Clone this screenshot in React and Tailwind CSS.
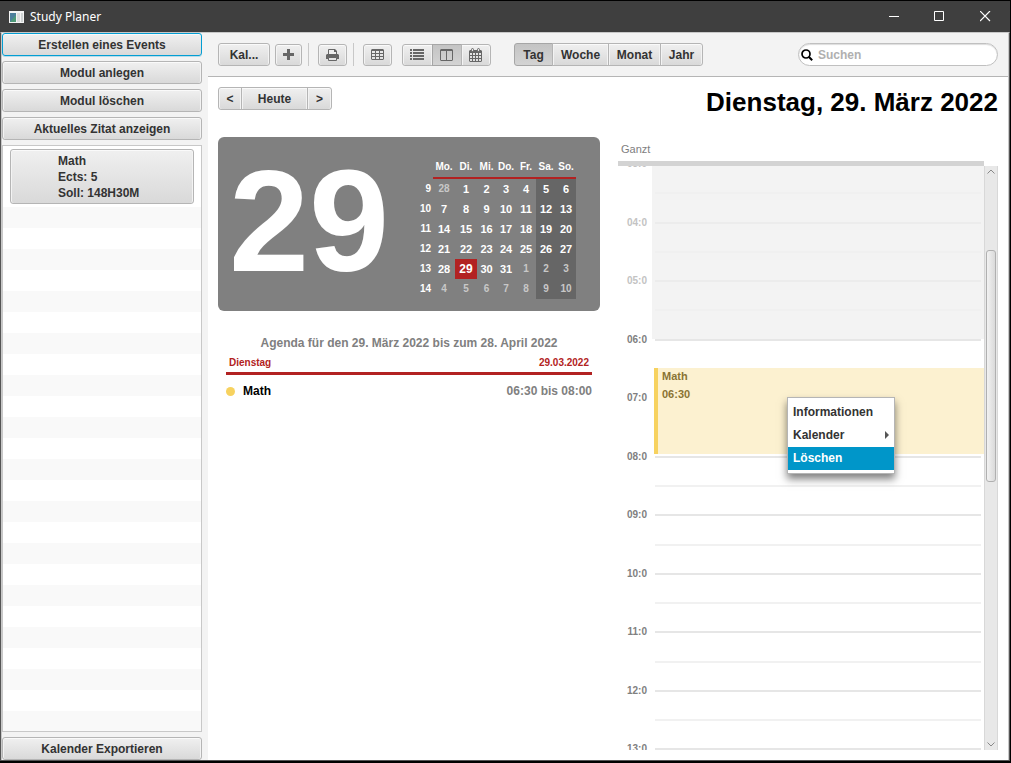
import React from "react";

const face = "bg-linear-to-b from-[#f0f0f0] to-[#d9d9d9] border text-[#333]";
const raised = `${face} border-[#b5b5b5] shadow-[inset_0_1px_0_#fafafa,inset_1px_0_0_#f3f3f3,inset_-1px_0_0_#f3f3f3]`;
const focusRing = `${face} border-[#039ed3] shadow-[inset_0_1px_0_#fafafa,0_1px_0_#b9dcea]`;
const pressed =
  "bg-linear-to-b from-[#c4c4c4] to-[#d3d3d3] border border-[#a6a6a6] text-[#333]";

function SideButton({ children, focused }) {
  return (
    <button
      className={`flex h-[23px] w-full shrink-0 items-center justify-center rounded-[3px] ${
        focused ? focusRing : raised
      }`}
    >
      {children}
    </button>
  );
}

function Segment({ active, label, width, children }) {
  return (
    <button
      aria-label={label}
      aria-pressed={active}
      className={`-ml-px flex h-full items-center justify-center first:ml-0 first:rounded-l-[3px] last:rounded-r-[3px] ${width} ${
        active ? pressed : raised
      }`}
    >
      {children}
    </button>
  );
}

const PlusIcon = () => (
  <svg width="11" height="12" viewBox="0 0 11 12" fill="#666">
    <path d="M4 0h3v4h4v3H7v4H4V7H0V4h4z" />
  </svg>
);

const PrintIcon = () => (
  <svg width="13" height="12" viewBox="0 0 13 12">
    <path d="M2.500 6V.5h6l2 2V6" fill="#eee" stroke="#666" />
    <path d="M8 0v3h3V2L9 0z" fill="#666" />
    <path d="M1 5h11l1 1v4H0V6z" fill="#666" />
    <path d="M2.500 8.500h8v3h-8z" fill="#e4e4e4" stroke="#666" />
  </svg>
);

const GridIcon = () => (
  <svg width="13" height="12" viewBox="0 0 13 12" fill="#666">
    <path
      fillRule="evenodd"
      d="M1 0h11l1 1v9l-1 1H1l-1-1V1zM1 2v2h3V2zM5 2v2h3V2zM9 2v2h3V2zM1 5v2h3V5zM5 5v2h3V5zM9 5v2h3V5zM1 8v2h3V8zM5 8v2h3V8zM9 8v2h3V8z"
    />
  </svg>
);

const ListIcon = () => (
  <svg width="15" height="12" viewBox="0 0 15 12" fill="#666">
    <path d="M0 0h2v2H0zM3 0h11v2H3zM0 3h2v2H0zM3 3h11v2H3zM0 6h2v2H0zM3 6h11v2H3zM0 9h2v2H0zM3 9h11v2H3z" />
  </svg>
);

const ColumnsIcon = () => (
  <svg width="14" height="12" viewBox="0 0 14 12" fill="#666">
    <path
      fillRule="evenodd"
      d="M1 0h11l1 1v10l-1 1H1l-1-1V1zM1 2v9h5V2zM7 2v9h5V2z"
    />
  </svg>
);

const CalendarIcon = () => (
  <svg width="14" height="14" viewBox="0 0 14 14" fill="#666">
    <path
      fillRule="evenodd"
      d="M0 3l1-1h11l1 1v10l-1 1H1l-1-1zM1 5v2h2V5zM4 5v2h2V5zM7 5v2h2V5zM10 5v2h2V5zM1 8v2h2V8zM4 8v2h2V8zM7 8v2h2V8zM10 8v2h2V8zM1 11v2h2v-2zM4 11v2h2v-2zM7 11v2h2v-2zM10 11v2h2v-2z"
    />
    <rect x="2.500" y=".5" width="2" height="3" rx="1" fill="#e8e8e8" stroke="#666" />
    <rect x="8.500" y=".5" width="2" height="3" rx="1" fill="#e8e8e8" stroke="#666" />
  </svg>
);

function TitleBar() {
  return (
    <header className="flex h-8 shrink-0 items-center border-t border-black bg-[#3f3f3f] pr-px text-white">
      <svg className="ml-[9px]" width="15" height="12" viewBox="0 0 15 12">
        <rect width="15" height="12" fill="#f4f4f4" />
        <rect x="1" y="2" width="6" height="9" fill="#4d7f9c" />
        <path d="M1 11l6-7v7z" fill="#4f9a78" />
        <rect x="8" y="2" width="3" height="9" fill="#dcdcdc" />
        <rect x="12" y="2" width="2" height="9" fill="#cfd3d3" />
      </svg>
      <h1 className="ml-[6px] flex-1 font-['Noto_Sans','Open_Sans',sans-serif] text-[12px] font-normal">Study Planer</h1>
      <button aria-label="Minimieren" className="flex h-full w-[45px] items-center justify-center">
        <svg width="11" height="11" stroke="#fff"><path d="M0 5.500h10" /></svg>
      </button>
      <button aria-label="Maximieren" className="flex h-full w-[45px] items-center justify-center">
        <svg width="11" height="11" fill="none" stroke="#fff"><path d="M.5 .5h9v9h-9z" /></svg>
      </button>
      <button aria-label="Schließen" className="flex h-full w-[47px] items-center justify-center">
        <svg width="11" height="11" stroke="#fff" strokeWidth="1.200"><path d="M0 0l10 10M10 0L0 10" /></svg>
      </button>
    </header>
  );
}

function Sidebar() {
  return (
    <aside className="flex w-[206px] shrink-0 flex-col gap-[5px] bg-[#f3f3f3] pr-[6px]">
      <SideButton focused>Erstellen eines Events</SideButton>
      <SideButton>Modul anlegen</SideButton>
      <SideButton>Modul löschen</SideButton>
      <SideButton>Aktuelles Zitat anzeigen</SideButton>
      <ul className="min-h-0 flex-1 overflow-hidden border border-[#c8c8c8] bg-white">
        <li className="h-[61px] px-[7px] pt-[3px]">
          <button className={`h-[55px] w-full rounded-[3px] pl-[47px] text-left leading-4 ${raised}`}>
            Math
            <br />
            Ects: 5
            <br />
            Soll: 148H30M
          </button>
        </li>
        {Array.from({ length: 60 }, (_, i) => (
          <li key={i} className="h-[21px] odd:bg-white even:bg-[#f9f9f9]" />
        ))}
      </ul>
      <SideButton>Kalender Exportieren</SideButton>
    </aside>
  );
}

function Toolbar() {
  return (
    <div className="flex h-[44px] shrink-0 items-center border-b border-[#b5b5b5] bg-[#f3f3f3] px-[10px]">
      <button className={`h-[23px] w-[52px] rounded-[3px] ${raised}`}>Kal...</button>
      <button aria-label="Hinzufügen" className={`ml-[5px] flex h-[22px] w-[27px] items-center justify-center rounded-[3px] ${raised}`}>
        <PlusIcon />
      </button>
      <div className="ml-[6px] h-[23px] w-px bg-[#c8c8c8]" />
      <button aria-label="Drucken" className={`ml-[9px] flex h-[22px] w-[29px] items-center justify-center rounded-[3px] ${raised}`}>
        <PrintIcon />
      </button>
      <div className="ml-[6px] h-[23px] w-px bg-[#c8c8c8]" />
      <button aria-label="Tabelle" className={`ml-[9px] flex h-[22px] w-[29px] items-center justify-center rounded-[3px] ${raised}`}>
        <GridIcon />
      </button>
      <div className="ml-[10px] flex h-[22px]">
        <Segment label="Liste" width="w-[31px]"><ListIcon /></Segment>
        <Segment label="Spalten" width="w-[30px]" active><ColumnsIcon /></Segment>
        <Segment label="Kalender" width="w-[30px]"><CalendarIcon /></Segment>
      </div>
      <div className="ml-[23px] flex h-[23px]">
        <Segment width="w-[39px]" active>Tag</Segment>
        <Segment width="w-[57px]">Woche</Segment>
        <Segment width="w-[53px]">Monat</Segment>
        <Segment width="w-[43px]">Jahr</Segment>
      </div>
      <label className="ml-auto flex h-[23px] w-[200px] items-center rounded-full border border-[#c0c0c0] bg-white pl-[2px] shadow-[inset_0_1px_1px_#ddd]">
        <svg width="12" height="12" viewBox="0 0 12 12" fill="none" stroke="#000" strokeWidth="1.700">
          <circle cx="5" cy="5" r="4" />
          <path d="M8 8l3.200 3.200" strokeWidth="2" />
        </svg>
        <input
          type="text"
          aria-label="Suchen"
          placeholder="Suchen"
          className="ml-[5px] min-w-0 flex-1 bg-transparent outline-none placeholder:text-[#b0b0b0]"
        />
      </label>
    </div>
  );
}

const weeks = [
  [9, 28, 1, 2, 3, 4, 5, 6],
  [10, 7, 8, 9, 10, 11, 12, 13],
  [11, 14, 15, 16, 17, 18, 19, 20],
  [12, 21, 22, 23, 24, 25, 26, 27],
  [13, 28, 29, 30, 31, 1, 2, 3],
  [14, 4, 5, 6, 7, 8, 9, 10],
];

function MiniCalendar() {
  return (
    <table className="table-fixed border-collapse text-center text-[11px] leading-5 text-white">
      <colgroup>
        <col className="w-[20px]" />
        <col className="w-[22px]" />
        <col className="w-[22px]" />
        <col className="w-[19px]" />
        <col className="w-[20px]" />
        <col className="w-[20px]" />
        <col className="w-[20px]" />
        <col className="w-[20px]" />
      </colgroup>
      <thead className="text-[10px]">
        <tr>
          <th className="h-[20px] p-0" />
          {["Mo.", "Di.", "Mi.", "Do.", "Fr.", "Sa.", "So."].map((d) => (
            <th key={d} className="h-[20px] p-0">{d}</th>
          ))}
        </tr>
        <tr>
          <td className="h-[2px] p-0" />
          <td colSpan={7} className="h-[2px] bg-[#b22222] p-0" />
        </tr>
      </thead>
      <tbody>
        {weeks.map(([week, ...days], row) => (
          <tr key={week}>
            <th className="h-[20px] p-0 pr-[2px] text-right text-[10px]">{week}</th>
            {days.map((day, col) => {
              const outside = (row === 0 && day > 7) || (row > 3 && day < 15);
              const today = row === 4 && day === 29;
              return (
                <td
                  key={col}
                  className={`h-[20px] p-0 ${outside ? "text-[10px] text-[#c8c8c8]" : ""} ${
                    today ? "bg-[#b22222] text-[12px]" : col > 4 ? "bg-[#666]" : ""
                  }`}
                >
                  {day}
                </td>
              );
            })}
          </tr>
        ))}
      </tbody>
    </table>
  );
}

function Overview() {
  return (
    <section className="flex min-w-0 flex-[382] flex-col">
      <div className="flex h-[174px] shrink-0 items-start justify-between rounded-[6px] bg-[#808080] pl-[11px] pr-[24px] pt-[20px]">
        <div className="text-[144px] leading-[130px] text-white">29</div>
        <MiniCalendar />
      </div>
      <h3 className="mt-[24px] text-center leading-4 text-[#808080]">Agenda für den 29. März 2022 bis zum 28. April 2022</h3>
      <div className="mx-2 flex justify-between border-b-[3px] border-[#b22222] px-[3px] pb-[3px] pt-[6px] text-[10px] leading-[12px] text-[#b22222]">
        <span>Dienstag</span>
        <span>29.03.2022</span>
      </div>
      <div className="mx-2 mt-2 flex items-center leading-4">
        <span className="size-[9px] rounded-full bg-[#f7d25f]" />
        <span className="ml-2 flex-1 text-black">Math</span>
        <span className="text-[#808080]">06:30 bis 08:00</span>
      </div>
    </section>
  );
}

function ContextMenu() {
  return (
    <div
      role="menu"
      className="absolute left-[133px] top-[29px] flex w-[108px] flex-col border border-[#b5b5b5] bg-white py-[3px] text-[12px] text-[#333] shadow-[0_5px_8px_rgba(0,0,0,0.5)]"
    >
      <button role="menuitem" className="h-[23px] px-[5px] text-left">Informationen</button>
      <button role="menuitem" className="flex h-[23px] items-center justify-between px-[5px]">
        Kalender
        <svg width="4" height="8" fill="#555"><path d="M0 0l4 4-4 4z" /></svg>
      </button>
      <button role="menuitem" className="h-[23px] bg-[#0096c9] px-[5px] text-left text-white">Löschen</button>
    </div>
  );
}

const firstHour = 3;
const hours = Array.from({ length: 11 }, (_, i) => firstHour + i);
const percent = (h) => `${(h / hours.length) * 100}%`;

function DayView() {
  const start = 6.5;
  const end = 8;
  return (
    <section className="flex min-w-0 flex-[380] flex-col">
      <div className="mr-[14px] h-[29px] shrink-0 border-b-[5px] border-[#d3d3d3] pl-[3px] text-[11px] font-normal leading-6 text-[#808080]">
        Ganzt
      </div>
      <div className="flex min-h-0 flex-1">
        <div className="min-w-0 flex-1 overflow-hidden">
          <div className="relative -mt-[3px] flex h-[644px]">
            <div className="flex w-[34px] flex-col pr-[5px] text-right text-[10px] leading-3">
              {hours.map((h) => (
                <div key={h} className={`flex-1 ${h < 6 ? "text-[#c3c3c3]" : "text-[#808080]"}`}>
                  <div className="-mt-[5px]">{String(h).padStart(2, "0")}:0</div>
                </div>
              ))}
            </div>
            <div className="flex flex-1 flex-col">
              {hours.map((h) => (
                <div key={h} className={`flex flex-1 flex-col px-[3px] ${h < 6 ? "bg-[#f3f3f3]" : ""}`}>
                  <div className={`flex-1 border-t-2 ${h < 6 ? "border-[#ececec]" : "border-[#e6e6e6]"}`} />
                  <div className={`flex-1 border-t-2 ${h < 6 ? "border-[#f0f0f0]" : "border-[#f1f1f1]"}`} />
                </div>
              ))}
            </div>
            <div
              className="absolute left-[36px] right-0 pb-[2px]"
              style={{ top: percent(start - firstHour), height: percent(end - start) }}
            >
              <div className="h-full border-l-4 border-[#f7d25f] bg-[#fcf1d0] pl-1 text-[11px] text-[#8a7433]">
                <div className="leading-4">Math</div>
                <div className="leading-5">06:30</div>
              </div>
              <ContextMenu />
            </div>
          </div>
        </div>
        <div className="flex w-[14px] shrink-0 flex-col items-center border-x border-[#d8d8d8] bg-[#e8e8e8]">
          <svg className="mt-[3px] shrink-0" width="8" height="5" fill="none" stroke="#888"><path d="M.5 4.500L4 1l3.500 3.500" /></svg>
          <div className="flex w-full flex-1 flex-col px-px">
            <div className="flex-[76]" />
            <div className="flex-[231] rounded-[3px] border border-[#b0b0b0] bg-linear-to-r from-[#f2f2f2] to-[#dadada]" />
            <div className="flex-[261]" />
          </div>
          <svg className="mb-[3px] shrink-0" width="8" height="5" fill="none" stroke="#888"><path d="M.5 .5L4 4 7.500 .5" /></svg>
        </div>
      </div>
    </section>
  );
}

export default function App() {
  return (
    <div className="flex h-screen flex-col border-b-2 border-r border-black bg-white font-['Liberation_Sans',Arial,sans-serif] text-[12px] font-bold">
      <TitleBar />
      <div className="flex min-h-0 flex-1 border border-[#555] border-t-[#c8c8c8]">
        <div className="flex min-h-0 min-w-0 flex-1 border-x border-[#c8c8c8]">
          <Sidebar />
          <main className="flex min-w-0 flex-1 flex-col">
            <Toolbar />
            <div className="flex h-[60px] shrink-0 items-start justify-between px-[10px] pt-[10px]">
              <div className="flex h-[23px]">
                <Segment label="Zurück" width="w-[24px]">&lt;</Segment>
                <Segment width="w-[67px]">Heute</Segment>
                <Segment label="Weiter" width="w-[25px]">&gt;</Segment>
              </div>
              <h2 className="text-[26px] leading-[30px] text-black">Dienstag, 29. März 2022</h2>
            </div>
            <div className="flex min-h-0 flex-1 gap-[18px] px-[10px] pb-[10px]">
              <Overview />
              <DayView />
            </div>
          </main>
        </div>
      </div>
    </div>
  );
}
